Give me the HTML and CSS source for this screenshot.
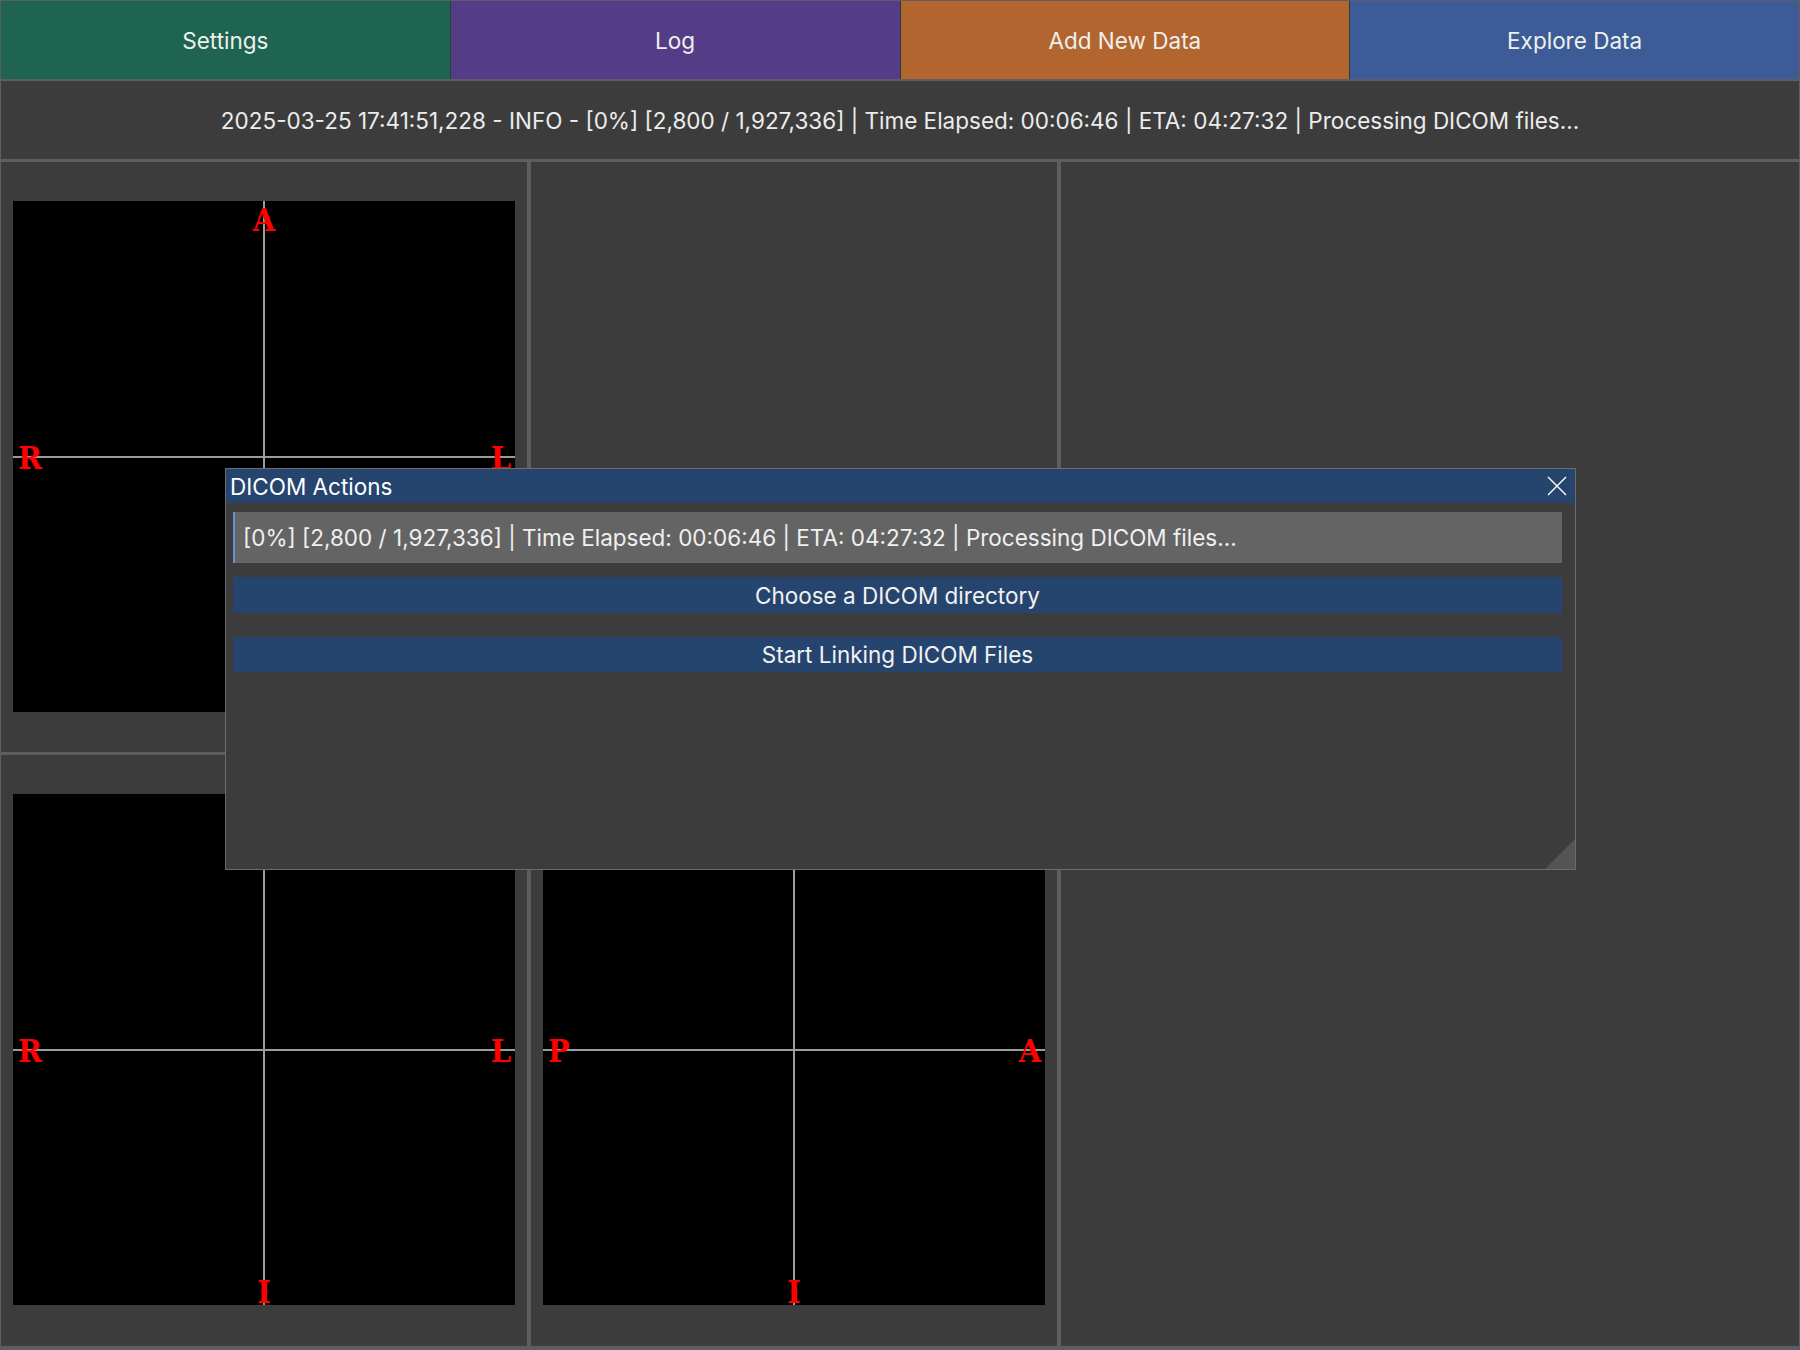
FILE: index.html
```html
<!DOCTYPE html>
<html lang="en">
<head>
<meta charset="utf-8">
<title>DICOM Viewer</title>
<link rel="stylesheet" href="styles.css">
</head>
<body>
<div class="app">
  <nav class="nav">
    <button class="nav-btn nav-settings">Settings</button>
    <button class="nav-btn nav-log">Log</button>
    <button class="nav-btn nav-add">Add New Data</button>
    <button class="nav-btn nav-explore">Explore Data</button>
  </nav>
  <div class="log-bar">2025-03-25 17:41:51,228 - INFO - [0%] [2,800 / 1,927,336] | Time Elapsed: 00:06:46 | ETA: 04:27:32 | Processing DICOM files...</div>
  <main class="views">
    <section class="panel panel-a">
      <div class="slice">
        <div class="cross-v"></div>
        <div class="cross-h"></div>
        <span class="lbl lbl-top">A</span>
        <span class="lbl lbl-left">R</span>
        <span class="lbl lbl-right">L</span>
        <span class="lbl lbl-bottom">P</span>
      </div>
    </section>
    <section class="panel panel-b"></section>
    <section class="panel panel-c"></section>
    <section class="panel panel-d">
      <div class="slice">
        <div class="cross-v"></div>
        <div class="cross-h"></div>
        <span class="lbl lbl-top">S</span>
        <span class="lbl lbl-left">R</span>
        <span class="lbl lbl-right">L</span>
        <span class="lbl lbl-bottom">I</span>
      </div>
    </section>
    <section class="panel panel-e">
      <div class="slice">
        <div class="cross-v"></div>
        <div class="cross-h"></div>
        <span class="lbl lbl-top">S</span>
        <span class="lbl lbl-left">P</span>
        <span class="lbl lbl-right">A</span>
        <span class="lbl lbl-bottom">I</span>
      </div>
    </section>
  </main>

  <div class="dialog">
    <div class="dialog-title">
      <span class="dialog-title-text">DICOM Actions</span>
      <svg class="dialog-close" width="20" height="20" viewBox="0 0 20 20">
        <path d="M1 1 L19 19 M19 1 L1 19" stroke="#ffffff" stroke-width="1.4" fill="none"/>
      </svg>
    </div>
    <div class="dialog-body">
      <div class="progress-field">[0%] [2,800 / 1,927,336] | Time Elapsed: 00:06:46 | ETA: 04:27:32 | Processing DICOM files...</div>
      <button class="action-btn action-choose">Choose a DICOM directory</button>
      <button class="action-btn action-link">Start Linking DICOM Files</button>
    </div>
    <div class="resize-grip"></div>
  </div>
</div>
</body>
</html>
```

FILE: styles.css
```css
* {
  box-sizing: border-box;
}

html, body {
  margin: 0;
  padding: 0;
  width: 1800px;
  height: 1350px;
  overflow: hidden;
  background: #3c3c3c;
}

.app {
  position: relative;
  width: 1800px;
  height: 1350px;
  display: flex;
  flex-direction: column;
  background: #5e5e62;
  padding: 1px 1px 4px 1px;
  font-family: Inter, "Noto Sans", sans-serif;
  color: #ececec;
}

.nav {
  display: flex;
  height: 78px;
  flex: none;
  margin-bottom: 2px;
}

.nav-btn {
  flex: 1;
  border: none;
  margin: 0;
  padding: 0;
  font-family: inherit;
  font-size: 22.5px;
  color: #eef0ee;
  cursor: pointer;
}

.nav-btn + .nav-btn {
  border-left: 1px solid #2e3b36;
}

.nav-settings { background: #1f6450; }
.nav-log { background: #553c86; }
.nav-add { background: #b3652f; }
.nav-explore { background: #3c5b97; }

.log-bar {
  height: 78px;
  flex: none;
  margin-bottom: 3px;
  background: #3c3c3c;
  display: flex;
  align-items: center;
  justify-content: center;
  font-size: 22.5px;
  color: #ececec;
  white-space: nowrap;
}

.views {
  flex: 1;
  display: grid;
  grid-template-columns: 526px 526px 738px;
  grid-template-rows: 590px 591px;
  column-gap: 4px;
  row-gap: 3px;
}

.panel {
  background: #3c3c3c;
  padding: 39px 0 0 12px;
}

.panel-c {
  grid-column: 3;
  grid-row: 1 / span 2;
}

.panel-d { grid-column: 1; grid-row: 2; }
.panel-e { grid-column: 2; grid-row: 2; }

.slice {
  position: relative;
  width: 502px;
  height: 511px;
  background: #000000;
}

.cross-v {
  position: absolute;
  left: 250px;
  top: 0;
  width: 2px;
  height: 100%;
  background: #9c9c9c;
}

.cross-h {
  position: absolute;
  left: 0;
  top: 255px;
  width: 100%;
  height: 2px;
  background: #9c9c9c;
}

.lbl {
  position: absolute;
  font-family: "DejaVu Serif Condensed", "DejaVu Serif", serif;
  font-stretch: condensed;
  font-weight: bold;
  font-size: 32px;
  line-height: 32px;
  color: #ff0000;
}

.lbl-top {
  top: 3px;
  left: 251px;
  transform: translateX(-50%);
}

.lbl-bottom {
  bottom: -3px;
  left: 251px;
  transform: translateX(-50%);
}

.lbl-left {
  left: 5px;
  top: 257px;
  transform: translateY(-50%);
}

.lbl-right {
  right: 4px;
  top: 257px;
  transform: translateY(-50%);
}

/* Dialog window */
.dialog {
  position: absolute;
  left: 225px;
  top: 468px;
  width: 1351px;
  height: 402px;
  background: #3c3c3c;
  border: 1px solid #6c6c6c;
  display: flex;
  flex-direction: column;
}

.dialog-title {
  height: 34px;
  flex: none;
  background: #26456e;
  display: flex;
  align-items: center;
  justify-content: space-between;
  padding: 0 8px 0 4px;
}

.dialog-title-text {
  font-size: 22.5px;
  color: #ffffff;
}

.dialog-close {
  display: block;
}

.dialog-body {
  padding: 9px 13px 0 7px;
  display: flex;
  flex-direction: column;
}

.progress-field {
  height: 51px;
  background: #646464;
  border-left: 2px solid #6a8fd6;
  padding-left: 8px;
  display: flex;
  align-items: center;
  font-size: 22.5px;
  color: #f0f0f0;
  white-space: nowrap;
}

.action-btn {
  border: none;
  margin: 0;
  padding: 0;
  background: #26456e;
  color: #f2f2f2;
  font-family: inherit;
  font-size: 22.5px;
  cursor: pointer;
}

.action-choose {
  height: 36px;
  margin-top: 14px;
}

.action-link {
  height: 35px;
  margin-top: 24px;
}

.resize-grip {
  position: absolute;
  right: 0;
  bottom: 0;
  width: 30px;
  height: 30px;
  background: #545454;
  clip-path: polygon(100% 0, 100% 100%, 0 100%);
}
```
